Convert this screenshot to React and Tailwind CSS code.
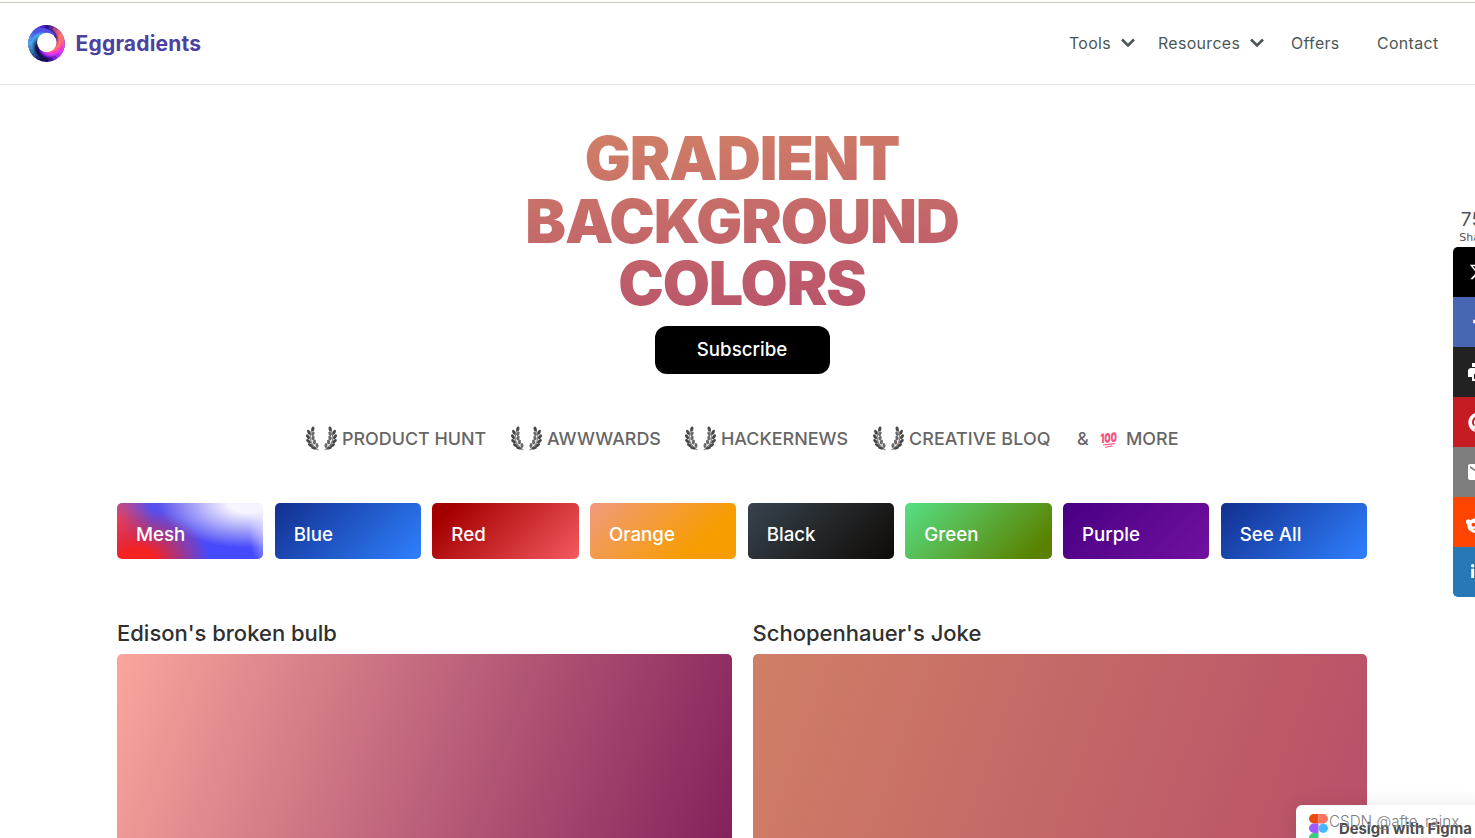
import React from 'react';
import { FaFacebookF, FaPinterest, FaRedditAlien, FaLinkedinIn } from 'react-icons/fa';
import { FaXTwitter } from 'react-icons/fa6';
import { MdPrint, MdEmail } from 'react-icons/md';

const navLinks = [
  { name: "Tools", hasMenu: true, className: "w-[89px]" },
  { name: "Resources", hasMenu: true, className: "w-[133px]" },
  { name: "Offers", className: "w-[86px]" },
  { name: "Contact", className: "w-[63px]" },
];

const awards = [
  { name: "PRODUCT HUNT", className: "w-[205px]" },
  { name: "AWWWARDS", className: "w-[174px]" },
  { name: "HACKERNEWS", className: "w-[188px]" },
  { name: "CREATIVE BLOQ", className: "w-[204px] tracking-[0.1px]" },
];

const categories = [
  {
    name: "Mesh",
    className:
      "bg-[radial-gradient(ellipse_50%_95%_at_14%_105%,#f52222_25%,#f5222200_100%),radial-gradient(ellipse_24%_110%_at_0%_35%,#ea4460_0%,#ea446000_100%),radial-gradient(ellipse_62%_80%_at_90%_0%,#f6f5ff_22%,#f6f5ff00_100%),radial-gradient(ellipse_16%_90%_at_106%_40%,#d5d4ff_0%,#d5d4ff00_100%),linear-gradient(#5850ea,#4349ff)]",
  },
  { name: "Blue", className: "bg-[linear-gradient(135deg,#122f8f,#2f80ff)]" },
  { name: "Red", className: "bg-[linear-gradient(135deg,#a40000_12%,#f5595f)]" },
  { name: "Orange", className: "bg-[linear-gradient(135deg,#f09a7d,#f79d00_75%)]" },
  { name: "Black", className: "bg-[linear-gradient(135deg,#37434e,#0f0a05)]" },
  { name: "Green", className: "bg-[linear-gradient(135deg,#57e086,#5a8200_88%)]" },
  { name: "Purple", className: "bg-[linear-gradient(135deg,#480082,#7110a0)]" },
  { name: "See All", className: "bg-[linear-gradient(135deg,#122f8f,#2f80ff)]" },
];

const gradients = [
  { name: "Edison's broken bulb", className: "bg-[linear-gradient(109.6deg,#faa69c_0%,#82205b_95%)]" },
  { name: "Schopenhauer's Joke", className: "bg-[linear-gradient(109.6deg,#d07f66_0%,#b84f69_95%)]" },
];

const shareButtons = [
  { id: "x", icon: <FaXTwitter className="size-[18px]" />, className: "bg-black" },
  { id: "facebook", icon: <FaFacebookF className="size-[18px]" />, className: "bg-[#4867b2]" },
  { id: "print", icon: <MdPrint className="size-[24px]" />, className: "bg-[#222222]" },
  { id: "pinterest", icon: <FaPinterest className="size-[21px]" />, className: "bg-[#c41c22]" },
  { id: "email", icon: <MdEmail className="size-[24px]" />, className: "bg-[#7d7d7d]" },
  { id: "reddit", icon: <FaRedditAlien className="size-[26px]" />, className: "bg-[#ff4500]" },
  { id: "linkedin", icon: <FaLinkedinIn className="size-[16px]" />, className: "bg-[#2878b8]" },
];

// Blades of the logo ring, clockwise, named by where each one leaves the rim
const blades = [
  "#5333e6", "#4a1fd6", "#35108c", "#5a2a90", "#b04a80", "#f2606c",
  "#ff7a62", "#ff6a80", "#ff50a8", "#f03cd0", "#dc38f4", "#b02eee",
  "#7a22cc", "#3a1490", "#1c0f55", "#151050", "#1c2a68", "#27508f",
  "#3274aa", "#3d90cc", "#4aa8e8", "#4a96ea", "#4a74e8", "#4e50e8",
];

export default function App() {
  return (
    <div className="relative h-[838px] overflow-hidden bg-white font-[Inter,sans-serif]">
      <Header />
      <main className="ml-[117px] flex w-[1250px] flex-col">
        <h1 className="mt-[42px] bg-[linear-gradient(175deg,#d38466_8%,#b64d6c_92%)] bg-clip-text text-center text-[61px] leading-[62.5px] font-black tracking-[-1.1px] text-transparent">
          GRADIENT<br />BACKGROUND<br />COLORS
        </h1>
        <button className="mt-[11px] h-12 w-[175px] self-center rounded-xl bg-black pt-[2px] text-[18.7px] font-medium text-white">
          Subscribe
        </button>

        <div className="mt-[51px] flex h-[30px] items-center pl-[189px] text-[17.9px] font-medium whitespace-nowrap text-[#666666]">
          {awards.map((award) => (
            <div key={award.name} className={`flex shrink-0 items-center ${award.className}`}>
              <Laurel />
              <Laurel className="ml-[5px] -scale-x-100" />
              <span className="ml-[5px]">{award.name}</span>
            </div>
          ))}
          <span className="w-[23px]">&amp;</span>
          <Hundred />
          <span className="ml-2">MORE</span>
        </div>

        <div className="mt-[48px] grid grid-cols-8 gap-[11.4px]">
          {categories.map((category) => (
            <a
              key={category.name}
              className={`flex h-14 items-center rounded-[5px] pt-[9px] pl-[19px] text-[18.7px] font-medium text-white ${category.className}`}
            >
              {category.name}
            </a>
          ))}
        </div>

        <div className="mt-[59px] grid grid-cols-2 gap-[21px]">
          {gradients.map((gradient) => (
            <div key={gradient.name}>
              <h2 className="h-[36px] text-[22px] leading-[30px] font-medium text-[#303030]">{gradient.name}</h2>
              <div className={`h-[310px] rounded-[5px] ${gradient.className}`} />
            </div>
          ))}
        </div>
      </main>
      <ShareRail />
      <FigmaBadge />
    </div>
  );
}

function Header() {
  return (
    <header className="border-b border-[#e6e6e6]">
      <div className="h-[3px] border-b border-[#c8c8c1] bg-[#fffffa]" />
      <div className="flex h-[81px] items-center justify-between pr-[35px] pl-[28px]">
        <a className="flex items-center">
          <Logo />
          <span className="ml-[10.5px] text-[21px] font-bold tracking-[0.2px] text-[#4b42a0]">Eggradients</span>
        </a>
        <nav className="flex text-[15.9px] tracking-[0.35px] text-[#4d5656]">
          {navLinks.map((link) => (
            <a key={link.name} className={`flex items-center ${link.className}`}>
              {link.name}
              {link.hasMenu && (
                <svg viewBox="0 0 14 10" className="ml-[9.5px] h-[10px] w-[14px]" fill="none" stroke="currentColor" strokeWidth="2.6">
                  <path d="M1 1.5L7 7.5L13 1.5" />
                </svg>
              )}
            </a>
          ))}
        </nav>
      </div>
    </header>
  );
}

function Logo() {
  return (
    <svg viewBox="0 0 37 37" className="size-[37px]">
      <clipPath id="logo-rim">
        <circle cx="18.5" cy="18.5" r="18.4" />
      </clipPath>
      <g clipPath="url(#logo-rim)">
        <circle cx="18.5" cy="18.5" r="14" fill="none" stroke="#3f2bb0" strokeWidth="10" />
        {blades.map((color, i) => (
          <path
            key={i}
            d="M18.5 1.6C25 2.6 30.4 9 29 19"
            fill="none"
            stroke={color}
            strokeWidth="4"
            transform={`rotate(${i * 15 - 36} 18.5 18.5)`}
          />
        ))}
      </g>
      <circle cx="18.8" cy="17.4" r="9.7" fill="#fff" />
    </svg>
  );
}

function Laurel({ className = "" }) {
  return (
    <svg viewBox="0 0 13 25" className={`mb-0.5 h-[25px] w-[13px] shrink-0 ${className}`}>
      <path d="M6 4C2.5 11 4 19 12.3 24" fill="none" stroke="#8a8a8a" strokeWidth="1.2" />
      <g fill="#484848">
        <ellipse cx="6.8" cy="3" rx="1.6" ry="2.6" transform="rotate(15 6.8 3)" />
        <ellipse cx="2.9" cy="6.2" rx="1.5" ry="2.7" transform="rotate(-28 2.9 6.2)" />
        <ellipse cx="2" cy="10.8" rx="1.5" ry="2.7" transform="rotate(-32 2 10.8)" />
        <ellipse cx="2.5" cy="15.3" rx="1.5" ry="2.8" transform="rotate(-45 2.5 15.3)" />
        <ellipse cx="4.4" cy="19.2" rx="1.5" ry="2.8" transform="rotate(-58 4.4 19.2)" />
        <ellipse cx="7.8" cy="22" rx="1.4" ry="2.8" transform="rotate(-75 7.8 22)" />
      </g>
      <g fill="#6a6a6a">
        <ellipse cx="6.9" cy="7.7" rx="1.5" ry="2.4" transform="rotate(28 6.9 7.7)" />
        <ellipse cx="7" cy="12" rx="1.6" ry="2.4" transform="rotate(18 7 12)" />
        <ellipse cx="8.4" cy="16" rx="1.6" ry="2.4" transform="rotate(8 8.4 16)" />
        <ellipse cx="11" cy="19.5" rx="1.5" ry="2.5" transform="rotate(-5 11 19.5)" />
      </g>
    </svg>
  );
}

function Hundred() {
  return (
    <svg viewBox="0 0 18 16" className="h-4 w-[18px] shrink-0">
      <text
        x="0.5"
        y="10.5"
        fontFamily="Inter, sans-serif"
        fontSize="13"
        fontWeight="900"
        fontStyle="italic"
        textLength="16.5"
        lengthAdjust="spacingAndGlyphs"
        fill="#fb4f7f"
        transform="rotate(-6 9 8)"
      >
        100
      </text>
      <path d="M3.5 13L14.5 11.6M5.5 15.2L12 14" stroke="#fb4f7f" strokeWidth="1.1" strokeLinecap="round" />
    </svg>
  );
}

// The rail starts inside the viewport and runs off its right edge
function ShareRail() {
  return (
    <aside className="absolute top-[208px] left-[1453px] w-[50px]">
      <div className="flex h-[39px] flex-col items-center text-[#555555]">
        <span className="text-[19px] leading-[23px] tracking-[0.3px]">752</span>
        <span className="font-['DejaVu_Sans',sans-serif] text-[11px] leading-[13px]">Shares</span>
      </div>
      <div className="overflow-hidden rounded-[5px]">
        {shareButtons.map((button) => (
          <a key={button.id} className={`flex h-[50px] items-center justify-center text-white ${button.className}`}>
            {button.icon}
          </a>
        ))}
      </div>
    </aside>
  );
}

function FigmaBadge() {
  return (
    <div className="absolute top-[805px] left-[1296px] h-[48px] w-[190px] rounded-md bg-white shadow-[0_0_18px_rgba(0,0,0,0.1)]">
      <div className="flex pt-[9px] pl-[13px]">
        <svg viewBox="0 0 19 29" className="h-[29px] w-[19px] shrink-0">
          <path d="M9.5 0H4.75a4.75 4.75 0 0 0 0 9.5H9.5Z" fill="#ea4c0e" />
          <path d="M9.5 0h4.75a4.75 4.75 0 0 1 0 9.5H9.5Z" fill="#ff7262" />
          <path d="M9.5 9.5H4.75a4.75 4.75 0 0 0 0 9.5H9.5Z" fill="#a259ff" />
          <circle cx="14.25" cy="14.25" r="4.75" fill="#45b8ff" />
          <path d="M4.75 19H9.5v4.75A4.75 4.75 0 1 1 4.75 19Z" fill="#3ecb7e" />
        </svg>
        <span className="mt-[5px] ml-[11px] text-[14.8px] leading-[20px] font-bold whitespace-nowrap text-[#4c4c4c]">
          Design with Figma
        </span>
      </div>
      <span className="absolute top-[7px] left-[33px] text-[15.2px] leading-[20px] font-light whitespace-nowrap text-[#808080]">
        CSDN @afte_rainx
      </span>
    </div>
  );
}
